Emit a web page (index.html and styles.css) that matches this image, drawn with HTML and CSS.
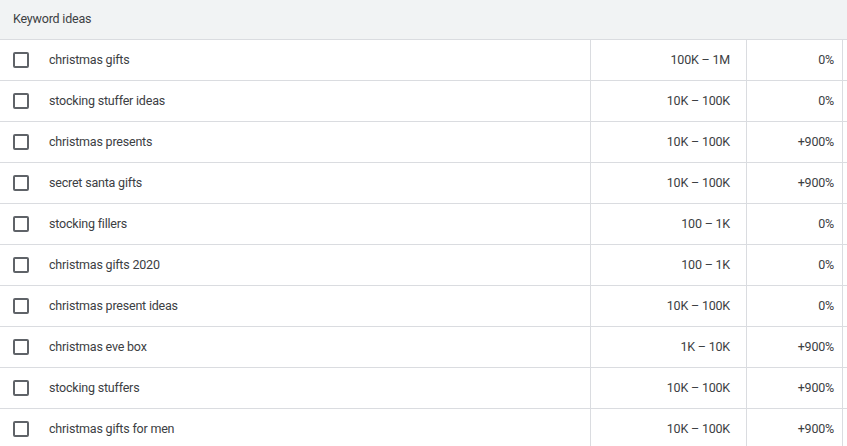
FILE: index.html
```html
<!DOCTYPE html>
<html>
<head>
<meta charset="utf-8">
<link rel="stylesheet" href="styles.css">
</head>
<body>
<div class="table">
  <div class="header">Keyword ideas</div>
  <div class="row"><div class="kw"><span class="cb"></span>christmas gifts</div><div class="vol">100K – 1M</div><div class="chg">0%</div><div class="rest"></div></div>
  <div class="row"><div class="kw"><span class="cb"></span>stocking stuffer ideas</div><div class="vol">10K – 100K</div><div class="chg">0%</div><div class="rest"></div></div>
  <div class="row"><div class="kw"><span class="cb"></span>christmas presents</div><div class="vol">10K – 100K</div><div class="chg">+900%</div><div class="rest"></div></div>
  <div class="row"><div class="kw"><span class="cb"></span>secret santa gifts</div><div class="vol">10K – 100K</div><div class="chg">+900%</div><div class="rest"></div></div>
  <div class="row"><div class="kw"><span class="cb"></span>stocking fillers</div><div class="vol">100 – 1K</div><div class="chg">0%</div><div class="rest"></div></div>
  <div class="row"><div class="kw"><span class="cb"></span>christmas gifts 2020</div><div class="vol">100 – 1K</div><div class="chg">0%</div><div class="rest"></div></div>
  <div class="row"><div class="kw"><span class="cb"></span>christmas present ideas</div><div class="vol">10K – 100K</div><div class="chg">0%</div><div class="rest"></div></div>
  <div class="row"><div class="kw"><span class="cb"></span>christmas eve box</div><div class="vol">1K – 10K</div><div class="chg">+900%</div><div class="rest"></div></div>
  <div class="row"><div class="kw"><span class="cb"></span>stocking stuffers</div><div class="vol">10K – 100K</div><div class="chg">+900%</div><div class="rest"></div></div>
  <div class="row"><div class="kw"><span class="cb"></span>christmas gifts for men</div><div class="vol">10K – 100K</div><div class="chg">+900%</div><div class="rest"></div></div>
</div>
</body>
</html>
```

FILE: styles.css
```css
html, body {
  margin: 0;
  padding: 0;
  background: #fff;
  overflow: hidden;
}
.table {
  width: 847px;
  font-family: Roboto, "Liberation Sans", sans-serif;
  font-size: 12.5px;
  letter-spacing: -0.2px;
  color: #3c4043;
}
.header {
  height: 39px;
  line-height: 38px;
  padding-left: 13px;
  background: #f1f3f4;
  border-bottom: 1px solid #dadce0;
}
.row {
  display: grid;
  grid-template-columns: 590px 156px 96px 1fr;
  height: 40px;
  border-bottom: 1px solid #dadce0;
}
.row > div {
  display: flex;
  align-items: center;
}
.kw {
  padding-left: 13px;
}
.kw, .vol, .chg {
  padding-bottom: 1px;
}
.cb {
  box-sizing: border-box;
  width: 16px;
  height: 16px;
  border: 2px solid #5f6368;
  border-radius: 2px;
  margin-right: 20px;
  flex: none;
}
.vol {
  justify-content: flex-end;
  padding-right: 16px;
  border-left: 1px solid #dadce0;
}
.chg {
  justify-content: flex-end;
  padding-right: 8px;
  border-left: 1px solid #dadce0;
}
.rest {
  border-left: 1px solid #dadce0;
}
```
